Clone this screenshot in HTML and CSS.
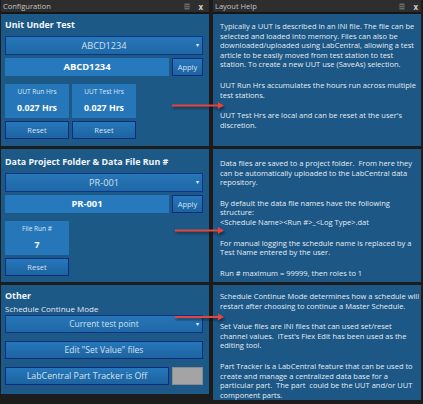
FILE: index.html
```html
<!DOCTYPE html>
<html>
<head>
<meta charset="utf-8">
<link rel="stylesheet" href="styles.css">
</head>
<body>
<div class="app">
  <section class="pane left">
    <header class="titlebar"><span class="title">Configuration</span><span class="tb-icons"><svg width="6" height="7" viewBox="0 0 6 7"><rect x="0.5" y="0.5" width="5" height="6" fill="#6a6a6a"/><path d="M1 2.5h4M1 4.5h4" stroke="#3a3a3a" stroke-width="0.8"/></svg><span class="close">x</span></span></header>
    <div class="group g1">
      <h2>Unit Under Test</h2>
      <div class="select">ABCD1234<span class="caret">▾</span></div>
      <div class="row">
        <div class="field">ABCD1234</div>
        <div class="btn apply">Apply</div>
      </div>
      <div class="tiles">
        <div class="tile-col">
          <div class="tile"><div class="tile-label">UUT Run Hrs</div><div class="tile-value">0.027 Hrs</div></div>
          <div class="btn">Reset</div>
        </div>
        <div class="tile-col">
          <div class="tile"><div class="tile-label">UUT Test Hrs</div><div class="tile-value">0.027 Hrs</div></div>
          <div class="btn">Reset</div>
        </div>
      </div>
    </div>
    <div class="group g2">
      <h2>Data Project Folder &amp; Data File Run #</h2>
      <div class="select">PR-001<span class="caret">▾</span></div>
      <div class="row">
        <div class="field">PR-001</div>
        <div class="btn apply">Apply</div>
      </div>
      <div class="tiles">
        <div class="tile-col">
          <div class="tile"><div class="tile-label">File Run #</div><div class="tile-value">7</div></div>
          <div class="btn">Reset</div>
        </div>
      </div>
    </div>
    <div class="group g3">
      <h2>Other</h2>
      <div class="label">Schedule Continue Mode</div>
      <div class="select">Current test point<span class="caret">▾</span></div>
      <div class="btn wide">Edit "Set Value" files</div>
      <div class="row">
        <div class="btn wide grow">LabCentral Part Tracker is Off</div>
        <div class="swatch"></div>
      </div>
    </div>
  </section>
  <section class="pane right">
    <header class="titlebar"><span class="title">Layout Help</span><span class="tb-icons"><svg width="6" height="7" viewBox="0 0 6 7"><rect x="0.5" y="0.5" width="5" height="6" fill="#6a6a6a"/><path d="M1 2.5h4M1 4.5h4" stroke="#3a3a3a" stroke-width="0.8"/></svg><span class="close">x</span></span></header>
    <div class="help h1">
      <p>Typically a UUT is described in an INI file. The file can be<br>selected and loaded into memory. Files can also be<br>downloaded/uploaded using LabCentral, allowing a test<br>article to be easily moved from test station to test<br>station. To create a new UUT use (SaveAs) selection.</p>
      <p>UUT Run Hrs accumulates the hours run across multiple<br>test stations.</p>
      <p>UUT Test Hrs are local and can be reset at the user's<br>discretion.</p>
    </div>
    <div class="help h2">
      <p>Data files are saved to a project folder.&nbsp; From here they<br>can be automatically uploaded to the LabCentral data<br>repository.</p>
      <p>By default the data file names have the following<br>structure:<br>&lt;Schedule Name&gt;&lt;Run #&gt;_&lt;Log Type&gt;.dat</p>
      <p>For manual logging the schedule name is replaced by a<br>Test Name entered by the user.</p>
      <p>Run # maximum = 99999, then roles to 1</p>
    </div>
    <div class="help h3">
      <p>Schedule Continue Mode determines how a schedule will<br>restart after choosing to continue a Master Schedule.</p>
      <p>Set Value files are INI files that can used set/reset<br>channel values.&nbsp; iTest's Flex Edit has been used as the<br>editing tool.</p>
      <p>Part Tracker is a LabCentral feature that can be used to<br>create and manage a centralized data base for a<br>particular part.&nbsp; The part&nbsp; could be the UUT and/or UUT<br>component parts.</p>
    </div>
  </section>
  <svg class="arrows" width="423" height="404" viewBox="0 0 423 404">
    <defs>
      <filter id="sh" x="-10%" y="-100%" width="130%" height="400%"><feGaussianBlur stdDeviation="0.8"/></filter>
    </defs>
    <g opacity="0.55" filter="url(#sh)" transform="translate(1,2)">
      <path d="M172 105.5H219" stroke="#111" stroke-width="2"/><path d="M218 102l6 3.5-6 3.5z" fill="#111"/>
      <path d="M175 230.5H219" stroke="#111" stroke-width="2"/><path d="M218 227l6 3.5-6 3.5z" fill="#111"/>
      <path d="M175 317H219" stroke="#111" stroke-width="2"/><path d="M218 313.5l6 3.5-6 3.5z" fill="#111"/>
    </g>
    <g>
      <path d="M172 105.5H219" stroke="#e5443f" stroke-width="2.2"/><path d="M218 102l6 3.5-6 3.5z" fill="#e5443f"/>
      <path d="M175 230.5H219" stroke="#e5443f" stroke-width="2.2"/><path d="M218 227l6 3.5-6 3.5z" fill="#e5443f"/>
      <path d="M175 317H219" stroke="#e5443f" stroke-width="2.2"/><path d="M218 313.5l6 3.5-6 3.5z" fill="#e5443f"/>
    </g>
  </svg>
</div>
</body>
</html>
```
FILE: styles.css
```css
* { box-sizing: border-box; }
html, body { margin: 0; padding: 0; }
body {
  width: 423px;
  height: 404px;
  background: #1c1c1c;
  font-family: "Open Sans", "Noto Sans", sans-serif;
  color: #e6eef6;
  overflow: hidden;
}
.app {
  position: relative;
  display: flex;
  gap: 4px;
  padding-left: 1px;
  width: 423px;
  height: 404px;
}
.pane {
  width: 208px;
  display: flex;
  flex-direction: column;
}
.titlebar {
  height: 14px;
  background: #2e2e2e;
  border-bottom: 2px solid #161616;
  display: flex;
  align-items: center;
  justify-content: space-between;
  padding: 0 6px 0 2px;
  font-size: 7.5px;
  color: #c4c4c4;
}
.right .titlebar { padding-right: 3px; }
.tb-icons { display: flex; align-items: center; gap: 8px; }
.close { font-weight: bold; font-size: 8px; color: #d0d0d0; }

.group {
  background: #1d5987;
  padding: 4px 6px 0 4px;
  display: flex;
  flex-direction: column;
}
.g1 { height: 132px; }
.g2 { height: 133px; margin-top: 3px; }
.g3 { height: 109px; margin-top: 3px; }
h2 {
  margin: 0;
  font-size: 8.9px;
  font-weight: bold;
  color: #f2f6fa;
  height: 14px;
  line-height: 14px;
  white-space: nowrap;
}
.g1 h2 { margin-bottom: 4px; }
.g2 h2 { margin-bottom: 4px; margin-top: 2px; }
.label { font-size: 8px; height: 11px; line-height: 11px; color: #e0e8f0; }
.select {
  position: relative;
  height: 19px;
  background: linear-gradient(#2676b8, #1f68a6);
  border: 1px solid #0c358a;
  text-align: center;
  font-size: 9.2px;
  line-height: 17px;
  color: #d2e0ee;
}
.caret { position: absolute; right: 3px; top: 0; font-size: 6px; color: #e8eef4; }
.row { display: flex; gap: 3px; margin-top: 3px; }
.field {
  flex: 1;
  height: 18px;
  background: #2679bd;
  font-weight: bold;
  font-size: 9.4px;
  line-height: 18px;
  text-align: center;
  color: #ffffff;
}
.btn {
  height: 18px;
  background: linear-gradient(#2677ba, #1d63a0);
  border: 1px solid #0c2c84;
  font-size: 7.5px;
  line-height: 16px;
  text-align: center;
  color: #d4e2f0;
}
.apply { width: 31px; }
.tiles { display: flex; gap: 3px; margin-top: 8px; }
.tile-col { width: 64px; display: flex; flex-direction: column; gap: 3px; }
.tile {
  height: 34px;
  background: #2677b9;
  text-align: center;
  padding-top: 3px;
}
.tile-label { font-size: 6.5px; color: #dce8f4; line-height: 9px; }
.tile-value { font-size: 8.8px; font-weight: bold; color: #ffffff; line-height: 14px; margin-top: 5px; }
.wide { margin-top: 8px; font-size: 8.5px; }
.g3 .select { margin-top: 1px; height: 18px; line-height: 16px; font-size: 8.4px; }
.g3 .row { margin-top: 8px; }
.g3 .row .wide { margin-top: 0; font-size: 8.8px; }
.grow { flex: 1; }
.swatch { width: 31px; height: 18px; background: #a4a4a4; border: 1px solid #8a8a8a; }

.help {
  background: #1c5785;
  padding: 8px 0 0 7px;
  font-size: 7.5px;
  line-height: 9.6px;
  color: #e4ecf4;
  white-space: nowrap;
  overflow: hidden;
}
.help p { margin: 0 0 11px; }
.right .h1 { height: 132px; }
.right .h2 { height: 133px; margin-top: 3px; padding-top: 10px; }
.right .h3 { height: 115px; margin-top: 3px; padding-top: 7px; }

.arrows { position: absolute; left: 0; top: 0; pointer-events: none; }
```
